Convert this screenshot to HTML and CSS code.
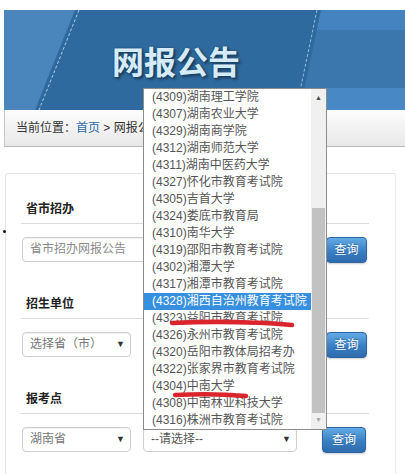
FILE: index.html
```html
<!DOCTYPE html>
<html lang="zh-CN">
<head>
    <meta charset="UTF-8">
    <meta name="viewport" content="width=device-width, initial-scale=1.0">
    <title>网报公告</title>
    <link rel="stylesheet" href="styles.css">
</head>
<body>
    <div class="banner">
        <svg class="bannerArt" width="401" height="100" viewBox="0 0 401 100">
            <rect width="401" height="100" fill="#3b77ad"/>
            <rect width="401" height="20" fill="#4483bf"/>
            <rect y="78" width="401" height="22" fill="#4888c5"/>
            <polygon points="0,0 71,0 31,100 0,100" fill="#4a85bc"/>
            <polygon points="71,0 317,0 296,100 31,100" fill="#2f6a9e"/>
            <line x1="75" y1="0" x2="35" y2="100" stroke="#a8cae6" stroke-width="1" stroke-dasharray="3 2"/>
            <line x1="313" y1="0" x2="292" y2="100" stroke="#8fb9df" stroke-width="1" stroke-dasharray="3 2"/>
        </svg>
        <h1 class="bannerTitle">网报公告</h1>
    </div>
    <div class="crumbs">当前位置：<a class="crumbLink">首页</a> &gt; 网报公告</div>

    <div class="panel">
        <span class="dot"></span>
        <div class="section">
            <div class="sectionTitle">省市招办</div>
            <div class="row">
                <div class="field wideField">省市招办网报公告</div>
                <div class="btn">查询</div>
            </div>
        </div>
        <div class="section">
            <div class="sectionTitle">招生单位</div>
            <div class="row">
                <div class="field selectBox">选择省（市）<span class="arrow">▼</span></div>
                <div class="btn">查询</div>
            </div>
        </div>
        <div class="section">
            <div class="sectionTitle">报考点</div>
            <div class="row">
                <div class="field selectBox">湖南省<span class="arrow">▼</span></div>
                <div class="field selectBox schoolSelect">--请选择--<span class="arrow">▼</span></div>
                <div class="btn lastBtn">查询</div>
            </div>
        </div>
    </div>

    <div class="dropList">
        <ul class="options">
            <li>(4309)湖南理工学院</li>
            <li>(4307)湖南农业大学</li>
            <li>(4329)湖南商学院</li>
            <li>(4312)湖南师范大学</li>
            <li>(4311)湖南中医药大学</li>
            <li>(4327)怀化市教育考试院</li>
            <li>(4305)吉首大学</li>
            <li>(4324)娄底市教育局</li>
            <li>(4310)南华大学</li>
            <li>(4319)邵阳市教育考试院</li>
            <li>(4302)湘潭大学</li>
            <li>(4317)湘潭市教育考试院</li>
            <li class="picked">(4328)湘西自治州教育考试院</li>
            <li>(4323)益阳市教育考试院</li>
            <li>(4326)永州市教育考试院</li>
            <li>(4320)岳阳市教体局招考办</li>
            <li>(4322)张家界市教育考试院</li>
            <li>(4304)中南大学</li>
            <li>(4308)中南林业科技大学</li>
            <li>(4316)株洲市教育考试院</li>
        </ul>
        <div class="scrollBar">
            <span class="scrollUp">▲</span>
            <span class="scrollThumb"></span>
            <span class="scrollDown">▼</span>
        </div>
        <svg class="marks" width="184" height="342" viewBox="0 0 184 342">
            <path d="M29 235 Q90 232 149 237" stroke="#d9252b" stroke-width="4.5" fill="none" stroke-linecap="round"/>
            <path d="M32 307 Q70 305 103 308" stroke="#d9252b" stroke-width="4.5" fill="none" stroke-linecap="round"/>
        </svg>
    </div>
</body>
</html>
```

FILE: styles.css
```css
body{
    margin: 0;
    background-color: #fff;
    font-family: "Liberation Sans", "Noto Sans CJK SC", sans-serif;
    font-size: 12px;
    color: #333;
}
.banner{
    position: relative;
    margin: 10px 0 0 4px;
    height: 100px;
    display: flex;
    align-items: center;
    overflow: hidden;
}
.bannerArt{
    position: absolute;
    left: 0;
    top: 0;
}
.bannerTitle{
    position: relative;
    margin: 0 0 0 108px;
    font-family: "Noto Sans CJK SC", sans-serif;
    font-size: 32px;
    font-weight: 700;
    line-height: 1;
    color: #d5ecf8;
    text-shadow: 0 0 2px #173d60, 1px 1px 0 #1c4870, 2px 2px 3px rgba(0, 0, 0, 0.45);
}
.crumbs{
    margin-left: 4px;
    height: 36px;
    line-height: 37px;
    padding-left: 11px;
    border-left: 1px solid #c8c8c8;
    border-bottom: 1px solid #b8b8b8;
    background: linear-gradient(#fdfdfd, #e8e8e8);
    color: #333;
}
.crumbLink{
    color: #2d68a8;
}
.panel{
    position: relative;
    margin: 26px 0 0 5px;
    width: 348px;
    padding: 20px 26px 40px 15px;
    border: 1px solid #e4e4e4;
    border-right-color: #ececec;
    border-radius: 4px 0 0 0;
}
.dot{
    position: absolute;
    left: -3px;
    top: 56px;
    width: 3px;
    height: 3px;
    border-radius: 50%;
    background-color: #111;
}
.section{
    margin-bottom: 27px;
}
.sectionTitle{
    height: 29px;
    line-height: 30px;
    padding-left: 5px;
    border-bottom: 1px solid #dcdcdc;
    font-weight: 700;
    color: #222;
}
.row{
    display: flex;
    align-items: center;
    margin-top: 13px;
    height: 25px;
}
.field{
    box-sizing: border-box;
    height: 25px;
    line-height: 23px;
    margin-left: 1px;
    padding-left: 7px;
    border: 1px solid #cfcfcf;
    border-radius: 4px;
    box-shadow: inset 0 1px 1px rgba(0, 0, 0, 0.06);
    color: #8a8a8a;
    background-color: #fff;
}
.wideField{
    width: 290px;
}
.selectBox{
    position: relative;
    width: 109px;
    color: #777;
}
.schoolSelect{
    width: 154px;
    margin-left: 12px;
    color: #555;
}
.arrow{
    position: absolute;
    right: 5px;
    top: 0;
    font-size: 9px;
    color: #333;
}
.btn{
    box-sizing: border-box;
    width: 41px;
    height: 26px;
    line-height: 24px;
    margin-left: auto;
    margin-right: 2px;
    text-align: center;
    color: #fff;
    border: 1px solid #2d68a6;
    border-radius: 4px;
    background: linear-gradient(#62abe6, #3a7fc3 55%, #2e6bad);
    text-shadow: 0 -1px 0 rgba(0, 0, 0, 0.25);
    box-shadow: 0 1px 2px rgba(0, 0, 0, 0.2);
}
.lastBtn{
    width: 44px;
    margin-right: 3px;
}
.dropList{
    position: absolute;
    left: 143px;
    top: 88px;
    width: 182px;
    height: 340px;
    display: flex;
    border: 1px solid #8c8c8c;
    background-color: #fff;
}
.options{
    flex: 1;
    margin: 0;
    padding: 0;
    list-style: none;
}
.options li{
    height: 17px;
    line-height: 17px;
    padding-left: 8px;
    white-space: nowrap;
    color: #555;
}
.options .picked{
    background-color: #3690df;
    color: #fff;
}
.scrollBar{
    position: relative;
    width: 15px;
    background-color: #f0f0f0;
}
.scrollUp, .scrollDown{
    position: absolute;
    left: 0;
    width: 15px;
    text-align: center;
    font-size: 7px;
    line-height: 10px;
}
.scrollUp{
    top: 4px;
    color: #4a4a4a;
}
.scrollDown{
    bottom: 4px;
    color: #a8a8a8;
}
.scrollThumb{
    position: absolute;
    left: 1px;
    top: 119px;
    width: 13px;
    height: 205px;
    background-color: #c2c2c2;
}
.marks{
    position: absolute;
    left: -1px;
    top: -1px;
}
```
